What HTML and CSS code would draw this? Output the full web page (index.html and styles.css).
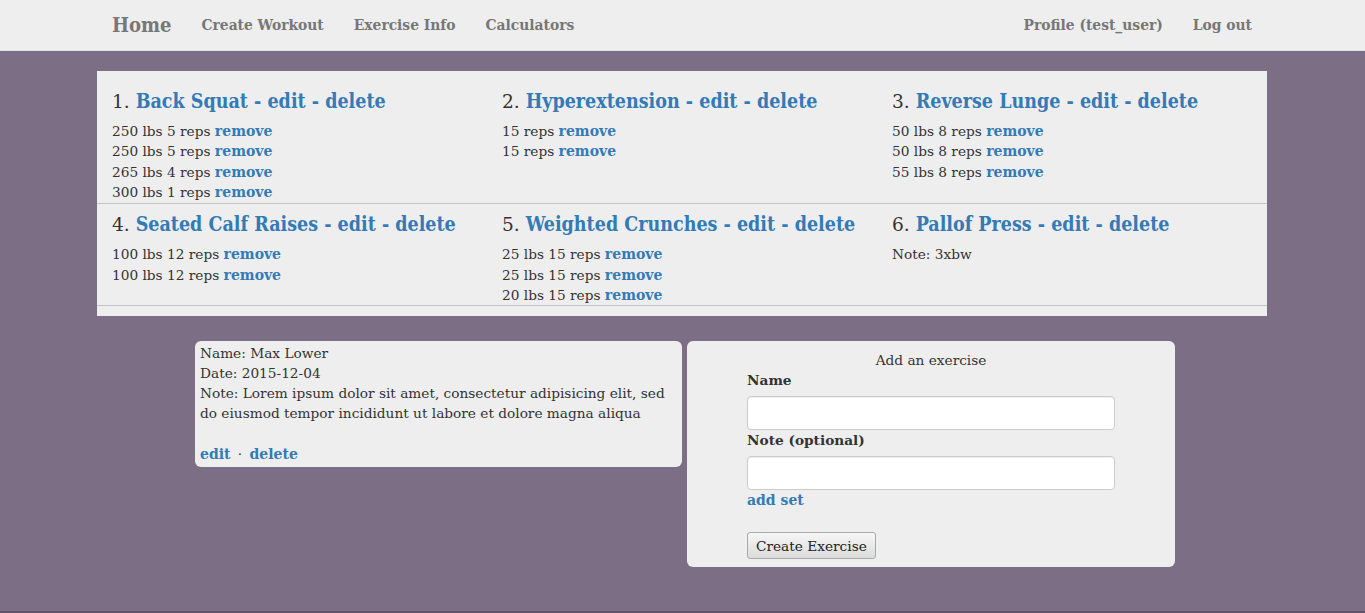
FILE: index.html
```html
<!DOCTYPE html>
<html>
<head>
<meta charset="utf-8">
<title>Workout</title>
<link rel="stylesheet" href="styles.css">
</head>
<body>
<nav class="navbar">
  <div class="nav-inner">
    <div class="nav-left">
      <a class="brand" href="#">Home</a>
      <a class="nav-link" href="#">Create Workout</a>
      <a class="nav-link" href="#">Exercise Info</a>
      <a class="nav-link" href="#">Calculators</a>
    </div>
    <div class="nav-right">
      <a class="nav-link" href="#">Profile (test_user)</a>
      <a class="nav-link" href="#">Log out</a>
    </div>
  </div>
</nav>

<main class="page">
  <section class="exercises">
    <div class="ex-row">
      <div class="ex">
        <h3>1. <a href="#">Back Squat - edit - delete</a></h3>
        <div class="set">250 lbs 5 reps <a href="#">remove</a></div>
        <div class="set">250 lbs 5 reps <a href="#">remove</a></div>
        <div class="set">265 lbs 4 reps <a href="#">remove</a></div>
        <div class="set">300 lbs 1 reps <a href="#">remove</a></div>
      </div>
      <div class="ex">
        <h3>2. <a href="#">Hyperextension - edit - delete</a></h3>
        <div class="set">15 reps <a href="#">remove</a></div>
        <div class="set">15 reps <a href="#">remove</a></div>
      </div>
      <div class="ex">
        <h3>3. <a href="#">Reverse Lunge - edit - delete</a></h3>
        <div class="set">50 lbs 8 reps <a href="#">remove</a></div>
        <div class="set">50 lbs 8 reps <a href="#">remove</a></div>
        <div class="set">55 lbs 8 reps <a href="#">remove</a></div>
      </div>
    </div>
    <div class="ex-row">
      <div class="ex">
        <h3>4. <a href="#">Seated Calf Raises - edit - delete</a></h3>
        <div class="set">100 lbs 12 reps <a href="#">remove</a></div>
        <div class="set">100 lbs 12 reps <a href="#">remove</a></div>
      </div>
      <div class="ex">
        <h3>5. <a href="#">Weighted Crunches - edit - delete</a></h3>
        <div class="set">25 lbs 15 reps <a href="#">remove</a></div>
        <div class="set">25 lbs 15 reps <a href="#">remove</a></div>
        <div class="set">20 lbs 15 reps <a href="#">remove</a></div>
      </div>
      <div class="ex">
        <h3>6. <a href="#">Pallof Press - edit - delete</a></h3>
        <div class="set">Note: 3xbw</div>
      </div>
    </div>
  </section>

  <section class="cards">
    <div class="card info">
      <div>Name: Max Lower</div>
      <div>Date: 2015-12-04</div>
      <div>Note: Lorem ipsum dolor sit amet, consectetur adipisicing elit, sed do eiusmod tempor incididunt ut labore et dolore magna aliqua</div>
      <div class="actions"><a href="#">edit</a> <span class="dot">·</span> <a href="#">delete</a></div>
    </div>
    <div class="card add">
      <div class="add-title">Add an exercise</div>
      <form class="add-form">
        <label>Name</label>
        <input class="field" type="text">
        <label>Note (optional)</label>
        <input class="field" type="text">
        <a class="add-set" href="#">add set</a>
        <button class="btn" type="button">Create Exercise</button>
      </form>
    </div>
  </section>
</main>
<div class="footer-line"></div>
</body>
</html>
```

FILE: styles.css
```css
* { box-sizing: border-box; }
html, body { margin: 0; padding: 0; }
body {
  background: #7c6e85;
  font-family: "DejaVu Serif", serif;
  font-size: 13.7px;
  line-height: 20px;
  color: #333;
  height: 613px;
  overflow: hidden;
  position: relative;
}
a { color: #337ab7; text-decoration: none; font-weight: bold; font-size: 14px; }

.navbar {
  background: #eeeeee;
  height: 51px;
  border-bottom: 1px solid #e2e2e2;
}
.nav-inner {
  width: 1170px;
  margin-left: 97px;
  display: flex;
  justify-content: space-between;
  align-items: center;
  height: 50px;
}
.nav-left, .nav-right { display: flex; align-items: center; }
.navbar a {
  color: #777;
  font-weight: bold;
  font-family: "DejaVu Serif Condensed", "DejaVu Serif", serif;
}
.navbar .brand { font-size: 20px; padding: 0 15px; }
.navbar .nav-link { font-size: 15.4px; padding: 0 15px; }

.page { width: 1170px; margin: 20px 0 0 97px; }

.exercises {
  background: #eeeeee;
  padding: 10px 0 10px;
}
.ex-row {
  display: grid;
  grid-template-columns: repeat(3, minmax(0, 1fr));
  border-bottom: 1px solid #c4c4c4;
  padding-bottom: 1px;
}
.ex-row:last-child { padding-bottom: 0; }
.ex { padding: 0 15px; }
.ex h3 {
  font-size: 18.6px;
  font-weight: normal;
  line-height: 21px;
  margin: 10px 0 9px;
  white-space: nowrap;
}
.ex h3 a {
  font-family: "DejaVu Serif Condensed", "DejaVu Serif", serif;
  font-size: 19.5px;
}
.set { line-height: 20.35px; }

.cards {
  display: flex;
  gap: 5px;
  margin: 25px 0 0 98px;
  align-items: flex-start;
}
.card {
  background: #eeeeee;
  border-radius: 6px;
}
.info { width: 487px; padding: 2px 5px 3px; }
.info .actions { margin-top: 21px; }
.info .dot { margin: 0 3px; }
.add { width: 488px; padding: 10px 0 8px; }
.add-title { text-align: center; line-height: 19px; }
.add-form {
  width: 368px;
  margin: 0 auto;
  display: flex;
  flex-direction: column;
  align-items: flex-start;
}
.add-form label { font-weight: bold; margin-bottom: 6px; }
.field {
  width: 368px;
  height: 34px;
  border: 1px solid #ccc;
  border-radius: 4px;
  background: #fff;
  box-shadow: inset 0 1px 1px rgba(0,0,0,0.075);
  margin: 0;
}
.add-set { margin-bottom: 22px; }
.btn {
  font-family: "DejaVu Serif", serif;
  font-size: 13.7px;
  color: #222;
  height: 27px;
  padding: 0 8px;
  border: 1px solid #a9a9a9;
  border-radius: 3px;
  background: linear-gradient(#f6f6f6, #dcdcdc);
  margin: 0;
}

.footer-line {
  position: absolute;
  left: 0; right: 0; bottom: 0;
  height: 2px;
  background: #5f5468;
}
```
